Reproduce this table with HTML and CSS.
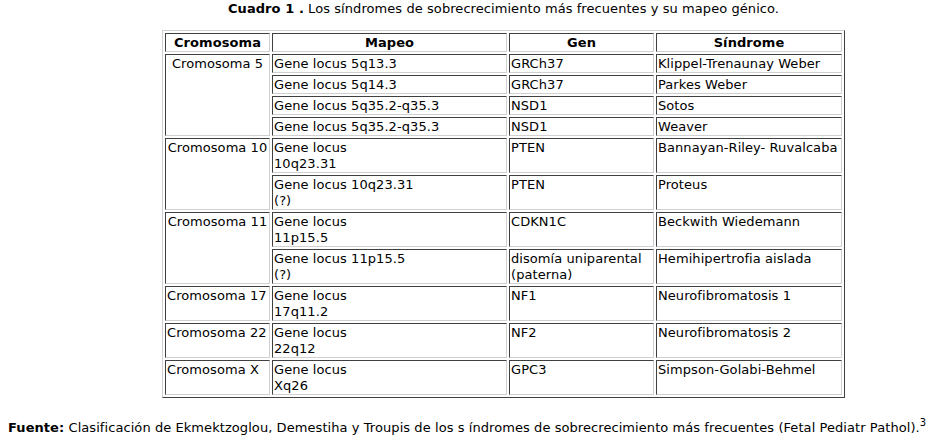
FILE: index.html
```html
<!DOCTYPE html>
<html lang="es">
<head>
<meta charset="utf-8">
<title>Cuadro 1</title>
<link rel="stylesheet" href="styles.css">
</head>
<body>
<div class="figure">
  <p class="caption"><b>Cuadro 1 .</b> Los síndromes de sobrecrecimiento más frecuentes y su mapeo génico.</p>
  <table class="synd">
    <thead>
      <tr>
        <th class="c1">Cromosoma</th>
        <th class="c2">Mapeo</th>
        <th class="c3">Gen</th>
        <th class="c4">Síndrome</th>
      </tr>
    </thead>
    <tbody>
      <tr>
        <td rowspan="4" class="center">Cromosoma 5</td>
        <td>Gene locus 5q13.3</td>
        <td>GRCh37</td>
        <td>Klippel-Trenaunay Weber</td>
      </tr>
      <tr>
        <td>Gene locus 5q14.3</td>
        <td>GRCh37</td>
        <td>Parkes Weber</td>
      </tr>
      <tr>
        <td>Gene locus 5q35.2-q35.3</td>
        <td>NSD1</td>
        <td>Sotos</td>
      </tr>
      <tr>
        <td>Gene locus 5q35.2-q35.3</td>
        <td>NSD1</td>
        <td>Weaver</td>
      </tr>
      <tr>
        <td rowspan="2" class="center">Cromosoma 10</td>
        <td>Gene locus<br>10q23.31</td>
        <td>PTEN</td>
        <td>Bannayan-Riley- Ruvalcaba</td>
      </tr>
      <tr>
        <td>Gene locus 10q23.31<br>(?)</td>
        <td>PTEN</td>
        <td>Proteus</td>
      </tr>
      <tr>
        <td rowspan="2" class="center">Cromosoma 11</td>
        <td>Gene locus<br>11p15.5</td>
        <td>CDKN1C</td>
        <td>Beckwith Wiedemann</td>
      </tr>
      <tr>
        <td>Gene locus 11p15.5<br>(?)</td>
        <td>disomía uniparental<br>(paterna)</td>
        <td>Hemihipertrofia aislada</td>
      </tr>
      <tr>
        <td>Cromosoma 17</td>
        <td>Gene locus<br>17q11.2</td>
        <td>NF1</td>
        <td>Neurofibromatosis 1</td>
      </tr>
      <tr>
        <td>Cromosoma 22</td>
        <td>Gene locus<br>22q12</td>
        <td>NF2</td>
        <td>Neurofibromatosis 2</td>
      </tr>
      <tr>
        <td>Cromosoma X</td>
        <td>Gene locus<br>Xq26</td>
        <td>GPC3</td>
        <td>Simpson-Golabi-Behmel</td>
      </tr>
    </tbody>
  </table>
</div>
<p class="source"><b>Fuente:</b> Clasificación de Ekmektzoglou, Demestiha y Troupis de los s índromes de sobrecrecimiento más frecuentes (Fetal Pediatr Pathol).<sup>3</sup></p>
</body>
</html>
```
FILE: styles.css
```css
html, body {
  margin: 0;
  padding: 0;
  background: #ffffff;
}

body {
  font-family: "DejaVu Sans", Verdana, sans-serif;
  font-size: 13px;
  letter-spacing: 0.07px;
  line-height: 16px;
  color: #000000;
}

.figure {
  margin-left: 72px;
  width: 863px;
  display: flex;
  flex-direction: column;
  align-items: center;
}

.caption {
  margin: 0;
  padding-top: 1px;
  text-align: center;
  white-space: nowrap;
}

.synd {
  margin-top: 13px;
  border-collapse: separate;
  border-spacing: 2px;
  table-layout: fixed;
  border-style: solid;
  border-width: 1px;
  border-color: #d0d0d0 #404040 #404040 #d0d0d0;
}

.synd th,
.synd td {
  border-style: solid;
  border-width: 1px;
  border-color: #404040 #d0d0d0 #d0d0d0 #404040;
  padding: 1px 1px 0 1px;
  vertical-align: top;
  text-align: left;
  font-weight: normal;
  white-space: nowrap;
}

.synd th {
  font-weight: bold;
  text-align: center;
}

.synd td.center {
  text-align: center;
}

.c1 { width: 101px; }
.c2 { width: 231px; }
.c3 { width: 141px; }
.c4 { width: 182px; }

.source {
  margin: 22px 0 0 8px;
  white-space: nowrap;
}

.source sup {
  font-size: 10px;
  line-height: 0;
  vertical-align: 6px;
}
```
